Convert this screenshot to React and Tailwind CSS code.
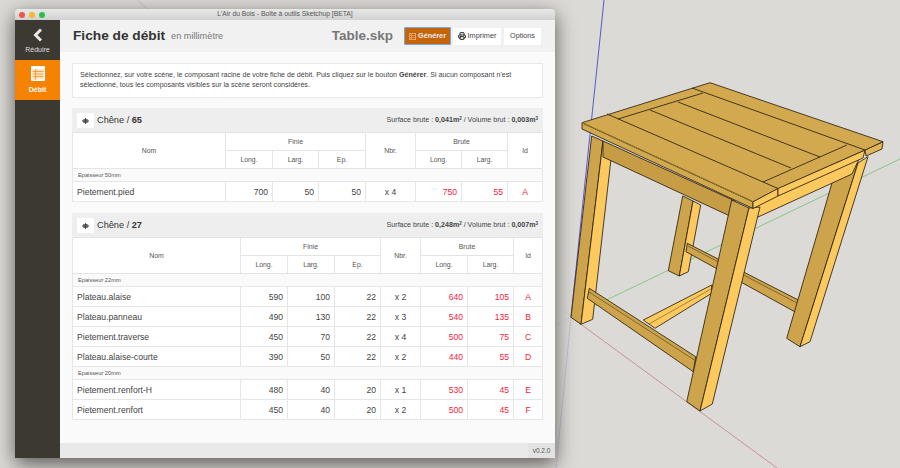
import { Printer } from "lucide-react";

const FONT = { fontFamily: '"Liberation Sans", Arial, sans-serif' };

const sections = [
  {
    name: "Chêne",
    count: 65,
    surface: "0,041",
    volume: "0,003",
    cols: ["w-[153px]", "w-[47px]", "w-[46px]", "w-[47px]", "w-[50px]", "w-[46px]", "w-[46px]", "w-[35px]"],
    groups: [
      {
        label: "Epaisseur 50mm",
        rows: [["Pietement.pied", 700, 50, 50, "x 4", 750, 55, "A"]],
      },
    ],
  },
  {
    name: "Chêne",
    count: 27,
    surface: "0,248",
    volume: "0,007",
    cols: ["w-[168px]", "w-[47px]", "w-[47px]", "w-[46px]", "w-[40px]", "w-[47px]", "w-[46px]", "w-[29px]"],
    groups: [
      {
        label: "Epaisseur 22mm",
        rows: [
          ["Plateau.alaise", 590, 100, 22, "x 2", 640, 105, "A"],
          ["Plateau.panneau", 490, 130, 22, "x 3", 540, 135, "B"],
          ["Pietement.traverse", 450, 70, 22, "x 4", 500, 75, "C"],
          ["Plateau.alaise-courte", 390, 50, 22, "x 2", 440, 55, "D"],
        ],
      },
      {
        label: "Epaisseur 20mm",
        rows: [
          ["Pietement.renfort-H", 480, 40, 20, "x 1", 530, 45, "E"],
          ["Pietement.renfort", 450, 40, 20, "x 2", 500, 45, "F"],
        ],
      },
    ],
  },
];

// the stool in the Sketchup viewport, coordinates are page pixels
function Part({ points, fill }) {
  return <polygon points={points} fill={fill} stroke="#2a2110" strokeWidth="0.85" strokeLinejoin="round" />;
}

function Seam({ d, color = "#2a2110", width = 0.85 }) {
  return <path d={d} stroke={color} strokeWidth={width} fill="none" />;
}

function Viewport() {
  const dark = "#cda44b";
  const light = "#fbc95d";
  return (
    <svg className="absolute inset-0 h-full w-full" viewBox="0 0 900 468">
      {/* axes */}
      <path d="M137 0L148 9" stroke="#c9bdb8" strokeWidth="0.8" fill="none" />
      <path d="M604 0L571 317" stroke="#4a4ac8" strokeWidth="0.9" fill="none" />
      <path d="M571 317L556 468" stroke="#a9a6d0" strokeWidth="0.8" strokeDasharray="1.5 1" fill="none" />
      <path d="M571 317L777 468" stroke="#c98a88" strokeWidth="0.9" fill="none" />
      <path d="M571 317L555 305" stroke="#cfc6c4" strokeWidth="0.8" strokeDasharray="1.5 1" fill="none" />
      <path d="M900 159L571 317" stroke="#7cc67e" strokeWidth="0.9" fill="none" />
      <path d="M571 317L555 325" stroke="#bcd0bc" strokeWidth="0.8" strokeDasharray="1.5 1" fill="none" />

      {/* back leg */}
      <Part points="682.7,196 693,201 679.3,276 668.3,270.7" fill={dark} />
      <Part points="693,201 700.7,205 688.3,271.7 679.3,276" fill={light} />

      {/* back stretcher */}
      <Part points="687.3,243.3 798.3,300 795.7,312.3 686,251.7" fill={dark} />
      <Seam d="M688 246L797 303" color="#5d4a1e" width="0.7" />

      {/* right leg */}
      <Part points="832,183 858,163 800,346.7 786.7,338.3" fill={dark} />
      <Part points="858,163 868,156.7 810,341.7 800,346.7" fill={light} />

      {/* side stretcher */}
      <Part points="643.3,320 711.7,285 711.7,293.3 655,328.3" fill={light} />
      <Seam d="M649 324L711 289" color="#6b5522" width="0.6" />

      {/* front left leg */}
      <Part points="591.7,136 603,141 581,324.3 571,317.3" fill={dark} />
      <Part points="603,141 611,159 592.7,319.3 581,324.3" fill={light} />

      {/* front stretcher */}
      <Part points="589.3,288.3 695.7,356.7 693.3,371.7 587.3,298.3" fill={dark} />
      <Seam d="M589 292L696 361" color="#5d4a1e" width="0.7" />

      {/* aprons */}
      <Part points="603,141 603,157 732,217 735,201" fill="#c69d45" />
      <Part points="753,204 860,157 852,174 758,217" fill={light} />

      {/* main leg */}
      <Part points="731.7,200 749,208 700,411 686.7,401.7" fill={dark} />
      <Part points="749,208 760,207 712.3,404 700,411" fill={light} />

      {/* table top, side faces first */}
      <Part points="582,122.7 753,201.7 753,208.5 582,129" fill="#d2a94f" />
      <Part points="753,201.7 778,188 778,196 753,208.5" fill={light} />
      <Part points="778,188 865,150 863,158 778,196" fill={light} />
      <Part points="865,150 883,141.7 882,149 866,156" fill="#e3b655" />
      <Part points="582,122.7 710,82.7 883,141.7 865,150 778,188.5 753,201.7" fill="#d2a94f" />

      {/* boards */}
      <Seam d="M607 114L778 188.5" />
      <Seam d="M692 88L865 150" />
      <Seam d="M618 119L703 93" />
      <Seam d="M763 182L847 145" />
      <Seam d="M650 110L791 168" />
      <Seam d="M678 102L820 157" />
      <Seam d="M582 122.7L753 201.7" color="#8f7433" width="1.1" />
    </svg>
  );
}

function Th({ children, ...props }) {
  return (
    <th className="border border-[#e4e4e4] p-0 pt-[2px] text-center text-[6.9px] font-normal text-[#555]" {...props}>
      {children}
    </th>
  );
}

function Td({ children, red, left, center }) {
  return (
    <td
      className={`border border-[#e6e6e6] px-[4px] pt-[2px] text-[8.6px] ${left ? "text-left" : center ? "text-center" : "text-right"} ${red ? "text-[#f4243c]" : "text-[#444]"}`}
    >
      {children}
    </td>
  );
}

function Section({ section }) {
  return (
    <section>
      <div className="flex h-[25px] items-center bg-[#eeeeee] px-[5px]">
        <span className="flex h-[15px] w-[17px] items-center justify-center rounded-[1px] bg-white">
          <svg width="7" height="6" viewBox="0 0 7 6">
            <path d="M0 3C1.5 0 5.5 0 7 3C5.5 6 1.5 6 0 3Z" fill="#666" />
            <path d="M3.5 0V6" stroke="#333" strokeWidth="0.8" />
          </svg>
        </span>
        <span className="ml-[3px] text-[9.2px] text-[#333]">
          {section.name} / <b>{section.count}</b>
        </span>
        <span className="ml-auto text-[7.1px] text-[#444]">
          Surface brute : <b>{section.surface}m<sup className="text-[4.5px]">2</sup></b> / Volume brut :{" "}
          <b>{section.volume}m<sup className="text-[4.5px]">3</sup></b>
        </span>
      </div>
      <table className="-mt-px w-[470px] table-fixed border-collapse bg-white">
        <colgroup>
          {section.cols.map((c, i) => (
            <col key={i} className={c} />
          ))}
        </colgroup>
        <thead>
          <tr className="h-[18px]">
            <Th rowSpan={2}>Nom</Th>
            <Th colSpan={3}>Finie</Th>
            <Th rowSpan={2}>Nbr.</Th>
            <Th colSpan={2}>Brute</Th>
            <Th rowSpan={2}>Id</Th>
          </tr>
          <tr className="h-[18px]">
            <Th>Long.</Th>
            <Th>Larg.</Th>
            <Th>Ep.</Th>
            <Th>Long.</Th>
            <Th>Larg.</Th>
          </tr>
        </thead>
        <tbody>
          {section.groups.map((group) => [
            <tr key={group.label} className="h-[13px]">
              <td colSpan={8} className="border border-[#e6e6e6] bg-[#fafafa] pl-[5px] text-[5.7px] text-[#555]">
                {group.label}
              </td>
            </tr>,
            ...group.rows.map((row) => (
              <tr key={row[0]} className="h-[20px]">
                <Td left>{row[0]}</Td>
                <Td>{row[1]}</Td>
                <Td>{row[2]}</Td>
                <Td>{row[3]}</Td>
                <Td center>{row[4]}</Td>
                <Td red>{row[5]}</Td>
                <Td red>{row[6]}</Td>
                <Td red center>{row[7]}</Td>
              </tr>
            )),
          ])}
        </tbody>
      </table>
    </section>
  );
}

function Sidebar() {
  return (
    <aside className="flex w-[45px] shrink-0 flex-col bg-[#3c3932] text-white">
      <div className="flex h-[40px] flex-col items-center pt-[8px]">
        <svg width="10" height="14" viewBox="0 0 10 14">
          <path d="M8 1.5L2.5 7L8 12.5" stroke="#e8e8e4" strokeWidth="3" fill="none" />
        </svg>
        <span className="mt-[3px] text-[7px] leading-[9px] text-[#ddd]">Réduire</span>
      </div>
      <div className="flex h-[40px] flex-col items-center bg-[#f58200] pt-[6px]">
        <svg width="14" height="15" viewBox="0 0 14 15">
          <rect x="0" y="0" width="14" height="15" rx="1" fill="#fff" />
          <rect x="1.5" y="3" width="11" height="10.5" fill="#fce3c4" />
          <path d="M1.5 5.5H12.5M1.5 8H12.5M1.5 10.5H12.5M4.5 3V13.5" stroke="#f79a2e" strokeWidth="0.9" />
        </svg>
        <span className="mt-[4px] text-[7px] font-bold leading-[9px]">Débit</span>
      </div>
    </aside>
  );
}

function Header() {
  return (
    <header className="flex h-[32px] shrink-0 items-center bg-[#f1f1f1] pl-[13px] pr-[14px]">
      <h1 className="text-[13.7px] font-bold text-[#333]">Fiche de débit</h1>
      <span className="ml-[6px] mt-[2px] text-[9.2px] text-[#777]">en millimètre</span>
      <span className="ml-auto text-[13.5px] font-bold text-[#777]">Table.skp</span>
      <button className="ml-[11px] flex h-[18px] w-[47px] items-center justify-center gap-[2px] rounded-[1px] border border-[#74a9e0] bg-[#c4650c] text-[7.3px] font-bold text-[#eee]">
        <svg width="7" height="7" viewBox="0 0 7 7">
          <rect x="0.4" y="0.4" width="6.2" height="6.2" fill="none" stroke="#eeb27a" strokeWidth="0.8" />
          <path d="M0.5 2.5H6.5M0.5 4.5H6.5M2.5 0.5V6.5" stroke="#eeb27a" strokeWidth="0.6" />
        </svg>
        Générer
      </button>
      <button className="ml-[2px] flex h-[17px] w-[48px] items-center justify-center gap-[2px] rounded-[1px] bg-white text-[7.3px] text-[#444]">
        <Printer size={8} strokeWidth={3} className="text-[#222]" />
        Imprimer
      </button>
      <button className="ml-[3px] h-[17px] w-[37px] rounded-[1px] bg-white text-[7.2px] text-[#444]">Options</button>
    </header>
  );
}

export default function App() {
  return (
    <div className="relative h-[468px] w-[900px] overflow-hidden bg-[#dcdad6] pl-[15px] pt-[9px]" style={FONT}>
      <Viewport />
      <div className="relative flex h-[449px] w-[540px] flex-col overflow-hidden rounded-t-[4px] shadow-[0_6px_20px_rgba(0,0,0,0.6)]">
        <div className="relative flex h-[11px] shrink-0 items-center justify-center bg-gradient-to-b from-[#e8e8e8] to-[#d2d2d2] text-[6.75px] text-[#555]">
          <div className="absolute left-[4px] flex gap-[4px]">
            <span className="h-[6px] w-[6px] rounded-full bg-[#f2544c]" />
            <span className="h-[6px] w-[6px] rounded-full bg-[#f5b82e]" />
            <span className="h-[6px] w-[6px] rounded-full bg-[#2dbf45]" />
          </div>
          L'Air du Bois - Boîte à outils Sketchup [BETA]
        </div>
        <div className="flex min-h-0 flex-1">
          <Sidebar />
          <main className="flex min-w-0 flex-1 flex-col bg-[#fafafa]">
            <Header />
            <div className="flex-1 px-[12px] pt-[11px]">
              <div className="h-[35px] border border-[#e8e8e8] bg-white px-[7px] pt-[6px] text-[7.1px] leading-[10px] text-[#444]">
                Sélectionnez, sur votre scène, le composant racine de votre fiche de débit. Puis cliquez sur le bouton{" "}
                <b>Générer</b>. Si aucun composant n'est
                <br />
                sélectionné, tous les composants visibles sur la scène seront considérés.
              </div>
              <div className="mt-[10px] flex flex-col gap-[11px]">
                {sections.map((s) => (
                  <Section key={s.count} section={s} />
                ))}
              </div>
            </div>
            <footer className="flex h-[15px] shrink-0 justify-end bg-[#e9e9e9]">
              <span className="flex w-[27px] items-center justify-center bg-[#e2e2e2] text-[6.5px] text-[#555]">v0.2.0</span>
            </footer>
          </main>
        </div>
      </div>
    </div>
  );
}
